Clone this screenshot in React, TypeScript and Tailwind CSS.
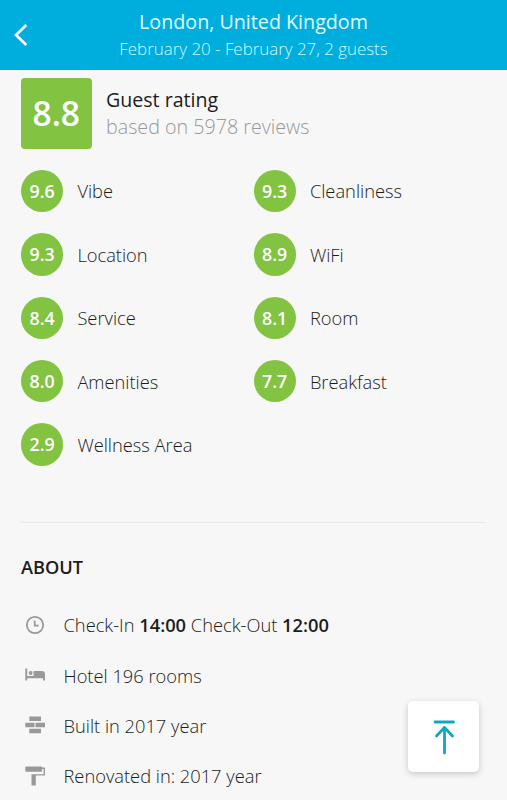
import type { ReactNode } from "react";

interface Rating {
  score: string;
  label: string;
}

const RATINGS: Rating[] = [
  { score: "9.6", label: "Vibe" },
  { score: "9.3", label: "Cleanliness" },
  { score: "9.3", label: "Location" },
  { score: "8.9", label: "WiFi" },
  { score: "8.4", label: "Service" },
  { score: "8.1", label: "Room" },
  { score: "8.0", label: "Amenities" },
  { score: "7.7", label: "Breakfast" },
  { score: "2.9", label: "Wellness Area" },
];

function ClockIcon() {
  return (
    <svg width="20" height="20" viewBox="0 0 20 20" fill="none" stroke="#999" className="shrink-0">
      <circle cx="10" cy="10" r="8.2" strokeWidth="1.8" />
      <path d="M9.7 5.5v5.2h4" strokeWidth="1.7" />
    </svg>
  );
}

function BedIcon() {
  return (
    <svg width="20" height="20" viewBox="0 0 20 20" fill="#999" className="shrink-0">
      <path d="M.3 3.5h1.9v7.4h6.3V5.9h8.2a3.3 3.3 0 0 1 3.3 3.3v6.3h-1.9v-2.3H2.2v2.3H.3z" />
      <circle cx="5.6" cy="8.1" r="2" />
    </svg>
  );
}

function BricksIcon() {
  return (
    <svg width="20" height="20" viewBox="0 0 20 20" fill="#999" className="shrink-0">
      <path d="M4.3 1.6h11.7v4.4H4.3zM.3 7.8h9.2v4.4H.3zM10.5 7.8H20v4.4h-9.5zM4.3 13.8h11.7v4.4H4.3z" />
    </svg>
  );
}

function RollerIcon() {
  return (
    <svg width="20" height="20" viewBox="0 0 20 20" fill="#999" className="shrink-0">
      <rect x=".3" y=".6" width="16.8" height="5.2" rx="1" />
      <path d="M17 1.6h3v8h-9.2v10H6.5V8.2h12.1V3H17z" />
    </svg>
  );
}

function RatingItem({ score, label }: Rating) {
  return (
    <div className="flex items-center gap-[14px]">
      <span className="flex size-[42.4px] shrink-0 items-center justify-center rounded-full bg-[#82c341] text-[17.8px] font-semibold text-white">
        {score}
      </span>
      <span className="text-[18.3px] font-light">{label}</span>
    </div>
  );
}

function AboutRow({ icon, children }: { icon: ReactNode; children: ReactNode }) {
  return (
    <li className="flex h-[50.2px] items-center gap-[18.5px] pl-1 text-[18.3px] font-light">
      {icon}
      <span>{children}</span>
    </li>
  );
}

export default function App() {
  return (
    <div className="relative h-[800px] w-[507px] overflow-hidden bg-[#f7f7f7] font-['Open_Sans',sans-serif] text-[#1c1c1c]">
      <header className="flex h-[70px] items-center bg-[#00aedd] text-white">
        <button type="button" aria-label="Back" className="ml-[13px] w-4 shrink-0">
          <svg width="16" height="24" viewBox="0 0 16 24" fill="none" stroke="currentColor" strokeWidth="2.7">
            <path d="M13.3 2 3 12l10.3 10" />
          </svg>
        </button>
        <div className="flex-1 pr-[29px] text-center">
          <h1 className="text-[19.7px] leading-[26px] text-[#e2fbff]">London, United Kingdom</h1>
          <p className="text-[16.9px] leading-[27px] font-light text-[#d5f8ff]">February 20 - February 27, 2 guests</p>
        </div>
      </header>

      <main className="px-[21px] pt-[8.4px]">
        <section className="flex items-center gap-[14.5px]">
          <div className="flex size-[70.5px] items-center justify-center rounded-[4px] bg-[#82c341] pb-0.5 text-[33.5px] font-semibold text-white">
            8.8
          </div>
          <div className="pb-[1.5px]">
            <h2 className="text-[19.6px] leading-[27px]">Guest rating</h2>
            <p className="text-[19.7px] leading-[27px] font-light text-[#999]">based on 5978 reviews</p>
          </div>
        </section>

        <section className="mt-[21px] grid grid-cols-2 gap-y-[21px]">
          {RATINGS.map((rating) => (
            <RatingItem key={rating.label} {...rating} />
          ))}
        </section>

        <hr className="mt-[56.6px] border-[#e8e8e8]" />

        <h2 className="mt-[31px] text-[18.2px] leading-[26px] font-semibold">ABOUT</h2>
        <ul className="mt-[19.5px]">
          <AboutRow icon={<ClockIcon />}>
            Check-In <b className="font-semibold">14:00</b> Check-Out <b className="font-semibold">12:00</b>
          </AboutRow>
          <AboutRow icon={<BedIcon />}>Hotel 196 rooms</AboutRow>
          <AboutRow icon={<BricksIcon />}>Built in 2017 year</AboutRow>
          <AboutRow icon={<RollerIcon />}>Renovated in: 2017 year</AboutRow>
        </ul>
      </main>

      <button
        type="button"
        aria-label="Back to top"
        className="absolute right-[28px] bottom-[28px] flex size-[71px] items-center justify-center rounded-[5px] bg-white shadow-[0_2px_6px_rgba(0,0,0,0.2)]"
      >
        <svg width="24" height="36" viewBox="0 0 24 36" fill="none" stroke="#12a5c6" strokeWidth="2.8" strokeLinecap="round" strokeLinejoin="round">
          <path d="M3 3h18.500M12.500 34V8.500M4.500 17 12.500 8.500l8 8.500" />
        </svg>
      </button>
    </div>
  );
}
